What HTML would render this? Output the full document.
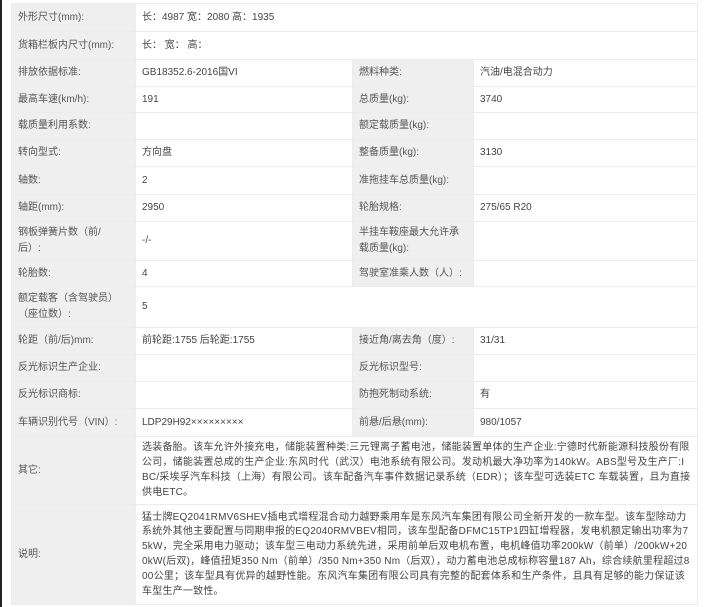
<!DOCTYPE html>
<html><head><style>
body{margin:0;width:720px;height:607px;background:#fff;position:relative;overflow:hidden;font-family:"Liberation Sans","Noto Sans CJK SC",sans-serif;font-size:10px;color:#444}
.bar{position:absolute;left:0;top:0;width:2px;height:607px;background:#222}
table{position:absolute;left:11px;top:3px;width:686px;border-collapse:collapse;table-layout:fixed;font-size:10px}
td{border:1px solid #ececec;padding:0 6px;vertical-align:middle;line-height:16px;font-size:10px;overflow:hidden}
td.l{background:#efefef;color:#555}
.p{line-height:14.8px;padding:3px 6px 2px;letter-spacing:0.22px;word-break:break-all}
</style></head><body><div class="bar"></div>
<table>
<colgroup><col style="width:124px"><col style="width:217px"><col style="width:121px"><col style="width:224px"></colgroup>
<tr style="height:28px"><td class="l">外形尺寸(mm):</td><td colspan="3">长：4987 宽：2080 高：1935</td></tr>
<tr style="height:28px"><td class="l">货箱栏板内尺寸(mm):</td><td colspan="3">长： 宽： 高：</td></tr>
<tr style="height:27px"><td class="l">排放依据标准:</td><td>GB18352.6-2016国VI</td><td class="l">燃料种类:</td><td>汽油/电混合动力</td></tr>
<tr style="height:26px"><td class="l">最高车速(km/h):</td><td>191</td><td class="l">总质量(kg):</td><td>3740</td></tr>
<tr style="height:27px"><td class="l">载质量利用系数:</td><td></td><td class="l">额定载质量(kg):</td><td></td></tr>
<tr style="height:27px"><td class="l">转向型式:</td><td>方向盘</td><td class="l">整备质量(kg):</td><td>3130</td></tr>
<tr style="height:28px"><td class="l">轴数:</td><td>2</td><td class="l">准拖挂车总质量(kg):</td><td></td></tr>
<tr style="height:27px"><td class="l">轴距(mm):</td><td>2950</td><td class="l">轮胎规格:</td><td>275/65 R20</td></tr>
<tr style="height:39px"><td class="l">钢板弹簧片数（前/<br>后）:</td><td>-/-</td><td class="l">半挂车鞍座最大允许承载质量(kg):</td><td></td></tr>
<tr style="height:26px"><td class="l">轮胎数:</td><td>4</td><td class="l">驾驶室准乘人数（人）:</td><td></td></tr>
<tr style="height:41px"><td class="l">额定载客（含驾驶员）<br>（座位数）:</td><td colspan="3">5</td></tr>
<tr style="height:27px"><td class="l">轮距（前/后)mm:</td><td>前轮距:1755 后轮距:1755</td><td class="l">接近角/离去角（度）:</td><td>31/31</td></tr>
<tr style="height:27px"><td class="l">反光标识生产企业:</td><td></td><td class="l">反光标识型号:</td><td></td></tr>
<tr style="height:27px"><td class="l">反光标识商标:</td><td></td><td class="l">防抱死制动系统:</td><td>有</td></tr>
<tr style="height:28px"><td class="l">车辆识别代号（VIN）:</td><td>LDP29H92×××××××××</td><td class="l">前悬/后悬(mm):</td><td>980/1057</td></tr>
<tr style="height:68px"><td class="l">其它:</td><td colspan="3" class="p">选装备胎。该车允许外接充电，储能装置种类:三元锂离子蓄电池，储能装置单体的生产企业:宁德时代新能源科技股份有限公司，储能装置总成的生产企业:东风时代（武汉）电池系统有限公司。发动机最大净功率为140kW。ABS型号及生产厂:IBC/采埃孚汽车科技（上海）有限公司。该车配备汽车事件数据记录系统（EDR）；该车型可选装ETC 车载装置，且为直接供电ETC。</td></tr>
<tr style="height:100px"><td class="l">说明:</td><td colspan="3" class="p">猛士牌EQ2041RMV6SHEV插电式增程混合动力越野乘用车是东风汽车集团有限公司全新开发的一款车型。该车型除动力系统外其他主要配置与同期申报的EQ2040RMVBEV相同，该车型配备DFMC15TP1四缸增程器，发电机额定输出功率为75kW，完全采用电力驱动；该车型三电动力系统先进，采用前单后双电机布置，电机峰值功率200kW（前单）/200kW+200kW(后双)，峰值扭矩350 Nm（前单）/350 Nm+350 Nm（后双），动力蓄电池总成标称容量187 Ah，综合续航里程超过800公里；该车型具有优异的越野性能。东风汽车集团有限公司具有完整的配套体系和生产条件，且具有足够的能力保证该车型生产一致性。</td></tr>
</table></body></html>
